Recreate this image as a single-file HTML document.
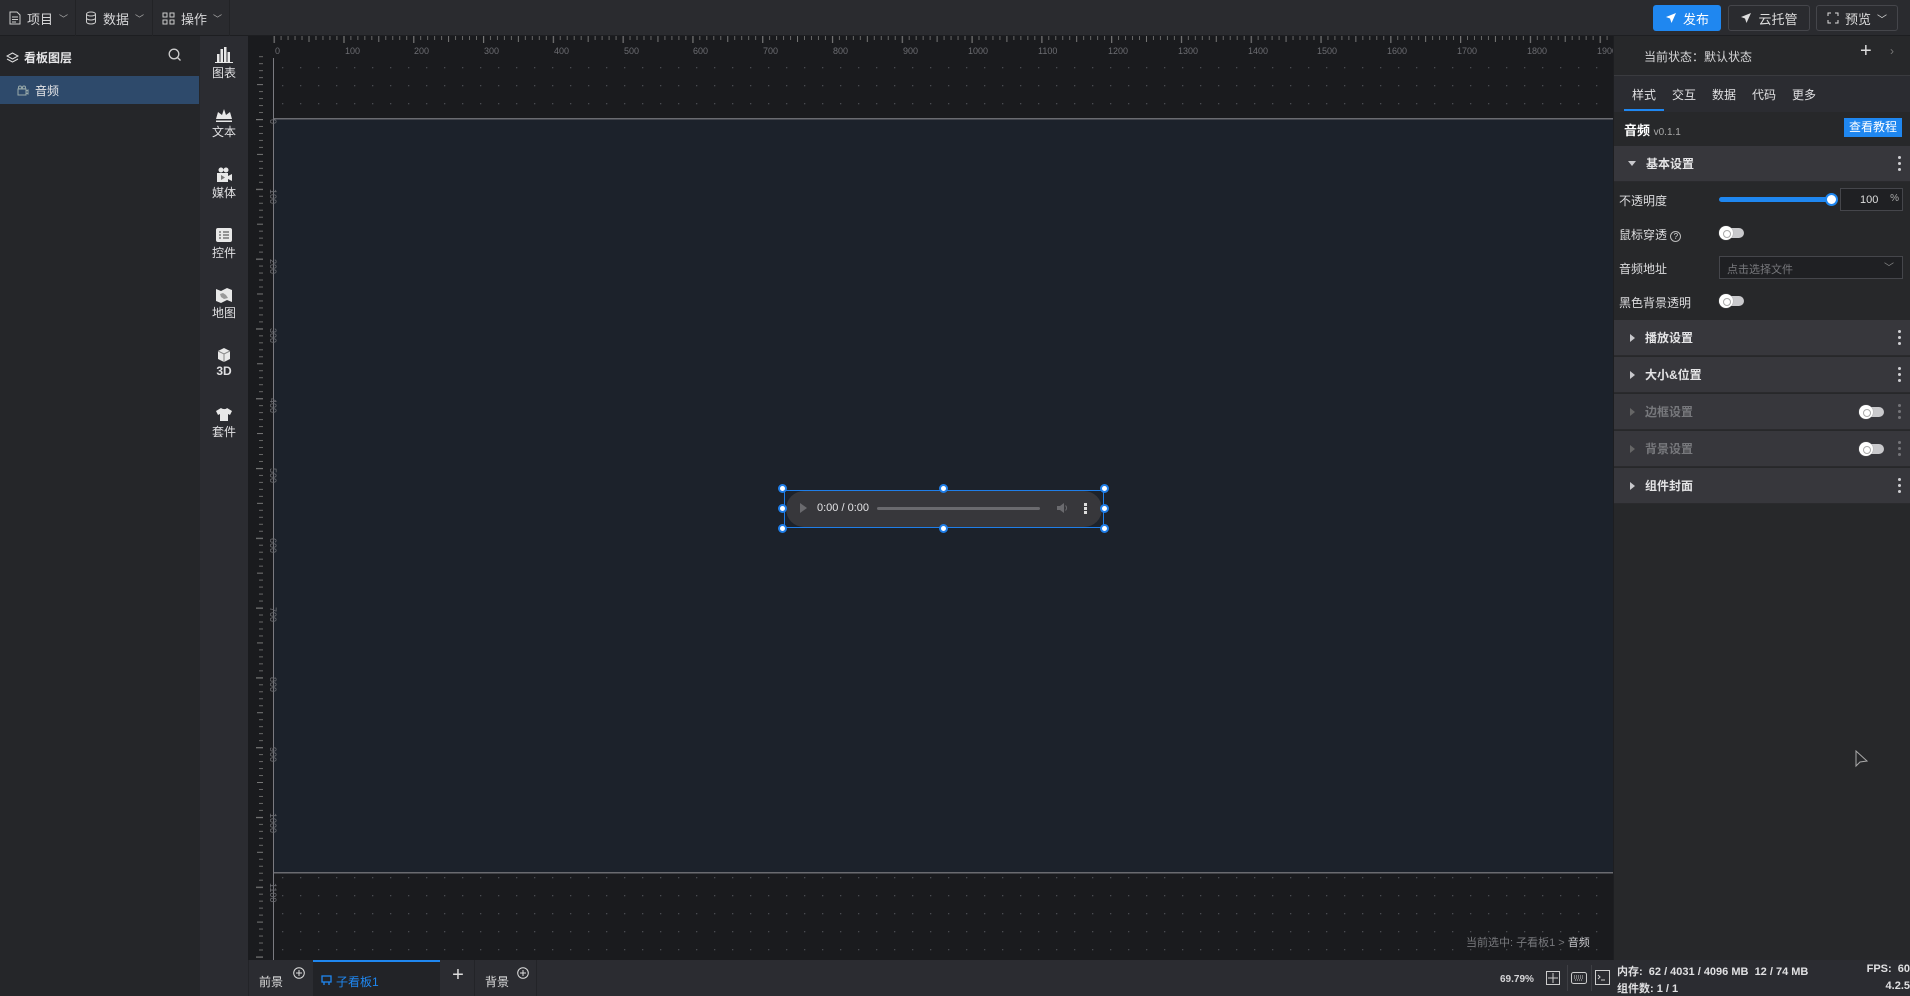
<!DOCTYPE html>
<html><head><meta charset="utf-8">
<style>
*{box-sizing:border-box;margin:0;padding:0}
body{width:1910px;height:996px;overflow:hidden;background:#1a1b1e;font-family:"Liberation Sans","Noto Sans CJK SC",sans-serif;font-size:12px;color:#d0d0d3;position:relative}
.abs{position:absolute}
#top{left:0;top:0;width:1910px;height:36px;background:#2a2b2f;border-bottom:1px solid #1d1e21}
.menu{top:0;height:36px;display:flex;align-items:center;gap:6px;color:#d6d6d8;font-size:13px;border-right:1px solid #222326}
.btn{top:5px;height:26px;border-radius:3px;display:flex;align-items:center;justify-content:center;gap:6px;font-size:13px}
#left{left:0;top:36px;width:200px;height:960px;background:#252629}
#tool{left:200px;top:36px;width:48px;height:960px;background:#2b2c31}
.ti{position:absolute;left:0;width:48px;text-align:center;font-size:12px;color:#e0e0e2}
.ti svg{display:block;margin:0 auto 1px}
#right{left:1613px;top:36px;width:297px;height:924px;background:#27282a;border-left:1px solid #1d1e21}
.sec{position:absolute;left:0;width:297px;height:36px;background:#37373c;display:flex;align-items:center;font-weight:bold;font-size:12px;color:#e4e4e6;border-bottom:1px solid #2a2a2d}
.sec .tri{width:0;height:0;border-top:4px solid transparent;border-bottom:4px solid transparent;border-left:5px solid #c8c8cc;margin:0 10px 0 16px}
.dots{position:absolute;right:10px;top:10px;width:3px}
.dots i{display:block;width:3px;height:3px;border-radius:50%;background:#d0d0d4;margin-bottom:3px}
.lbl{position:absolute;left:5px;font-size:12px;color:#dcdcde}
.tog{position:absolute;width:24px;height:10px;border-radius:5px;background:#c9c9cc}
.tog::before{content:"";position:absolute;left:-1px;top:-2px;width:14px;height:14px;border-radius:50%;background:#fff;box-shadow:0 0 1px #888}
.tog::after{content:"";position:absolute;left:3px;top:2px;width:6px;height:6px;border-radius:50%;border:1px solid #aaa}
#bottom{left:248px;top:960px;width:1365px;height:36px;background:#2b2c31}
#status{left:1613px;top:960px;width:297px;height:36px;background:#2b2c31;font-weight:bold;font-size:11px;color:#e0e0e2}
.h{position:absolute;width:9px;height:9px;border-radius:50%;background:#fff;border:2px solid #1f7ee8}
</style></head><body>

<div id="top" class="abs"></div>
<div class="abs menu" style="left:0;width:76px;padding-left:9px">
<svg width="12" height="14" viewBox="0 0 12 14"><path d="M1 1h7l3 3v9H1z" fill="none" stroke="#ccc"/><path d="M3 6h6M3 8.5h6M3 11h4" stroke="#ccc"/></svg>项目<span style="font-size:9px;color:#aaa">﹀</span></div>
<div class="abs menu" style="left:76px;width:77px;padding-left:9px">
<svg width="12" height="14" viewBox="0 0 12 14"><ellipse cx="6" cy="3" rx="4.5" ry="2" fill="none" stroke="#ccc"/><path d="M1.5 3v8c0 1 2 2 4.5 2s4.5-1 4.5-2V3M1.5 7c0 1 2 2 4.5 2s4.5-1 4.5-2" fill="none" stroke="#ccc"/></svg>数据<span style="font-size:9px;color:#aaa">﹀</span></div>
<div class="abs menu" style="left:153px;width:77px;padding-left:9px">
<svg width="13" height="13" viewBox="0 0 13 13" fill="none" stroke="#ccc"><rect x="1" y="1" width="4" height="4"/><rect x="8" y="1" width="4" height="4"/><rect x="1" y="8" width="4" height="4"/><rect x="8" y="8" width="4" height="4"/></svg>操作<span style="font-size:9px;color:#aaa">﹀</span></div>

<div class="abs btn" style="left:1653px;width:68px;background:#1f87f0;color:#fff"><svg width="12" height="12" viewBox="0 0 12 12"><path d="M11 1L1 5l4 1.5L6.5 11z" fill="#fff"/></svg>发布</div>
<div class="abs btn" style="left:1728px;width:82px;border:1px solid #45464b;color:#ddd"><svg width="12" height="12" viewBox="0 0 12 12"><path d="M11 1L1 5l4 1.5L6.5 11z" fill="#ddd"/></svg>云托管</div>
<div class="abs btn" style="left:1816px;width:82px;border:1px solid #45464b;color:#ddd"><svg width="12" height="12" viewBox="0 0 12 12" fill="none" stroke="#ddd"><path d="M1 4V1h3M8 1h3v3M11 8v3H8M4 11H1V8"/></svg>预览 <span style="font-size:10px">﹀</span></div>

<!-- left panel -->
<div id="left" class="abs">
 <div class="abs" style="left:6px;top:13px;display:flex;align-items:center;gap:5px;font-weight:bold;font-size:12px;color:#e6e6e8">
 <svg width="13" height="12" viewBox="0 0 13 12" fill="none" stroke="#ddd"><path d="M6.5 1L12 4 6.5 7 1 4z"/><path d="M1 7l5.5 3L12 7"/></svg>看板图层</div>
 <svg class="abs" style="left:168px;top:12px" width="14" height="14" viewBox="0 0 14 14" fill="none" stroke="#ccc" stroke-width="1.3"><circle cx="6" cy="6" r="4.8"/><path d="M9.5 9.5l3 3"/></svg>
 <div class="abs" style="left:0;top:40px;width:199px;height:28px;background:#2e4a6b;display:flex;align-items:center;padding-left:17px;gap:6px;font-size:12px;color:#e6e6e8">
 <svg width="12" height="11" viewBox="0 0 12 11" fill="none" stroke="#9aa"><rect x="1" y="4" width="8" height="6"/><circle cx="3" cy="2.5" r="1.5"/><circle cx="7" cy="2.5" r="1.5"/><path d="M9 6l2-1v4l-2-1"/></svg>音频</div>
</div>

<!-- toolbar -->
<div id="tool" class="abs">
 <div class="ti" style="top:11px"><svg width="18" height="16" viewBox="0 0 18 16" fill="#e8e8e8"><rect x="2" y="7" width="2.5" height="8"/><rect x="5.5" y="2" width="2.5" height="13"/><rect x="9" y="0" width="2.5" height="15"/><rect x="12.5" y="5" width="2.5" height="10"/><rect x="0" y="15" width="18" height="1"/></svg>图表</div>
 <div class="ti" style="top:72px"><svg width="18" height="14" viewBox="0 0 18 14" fill="#e8e8e8"><path d="M1 11l2-7 4 3 2-6 2 6 4-3 2 7z"/><rect x="1" y="12.5" width="16" height="1.5"/></svg>文本</div>
 <div class="ti" style="top:131px"><svg width="18" height="16" viewBox="0 0 18 16" fill="#e8e8e8"><circle cx="6" cy="3" r="2.5"/><circle cx="11" cy="3" r="2.5"/><rect x="2" y="6" width="11" height="9"/><path d="M13 9l4-2v7l-4-2z"/><path d="M6 8v5l4-2.5z" fill="#777"/></svg>媒体</div>
 <div class="ti" style="top:191px"><svg width="18" height="16" viewBox="0 0 18 16"><rect x="1" y="1" width="16" height="14" rx="2" fill="#e8e8e8"/><path d="M4 5h2M4 8h2M4 11h2M8 5h6M8 8h6M8 11h6" stroke="#777" stroke-width="1.4"/></svg>控件</div>
 <div class="ti" style="top:251px"><svg width="18" height="16" viewBox="0 0 18 16" fill="#e8e8e8"><path d="M1 2l5 2 6-3 5 2v12l-5-2-6 3-5-2z"/><path d="M5 7l3-1 3 2 2 3-4 1-3-2z" fill="#999"/></svg>地图</div>
 <div class="ti" style="top:311px;font-weight:bold"><svg width="16" height="16" viewBox="0 0 16 16"><path d="M8 1l6 3v8l-6 3-6-3V4z" fill="#e8e8e8"/><path d="M2 4l6 3 6-3M8 7v8" stroke="#888" fill="none"/></svg>3D</div>
 <div class="ti" style="top:371px"><svg width="18" height="15" viewBox="0 0 18 15" fill="#e8e8e8"><path d="M6 1L1 4l2 4 2-1v7h8V7l2 1 2-4-5-3c-1 1.5-4 1.5-6 0z"/></svg>套件</div>
</div>

<!-- rulers + canvas -->
<svg class="abs" style="left:248px;top:36px" width="1365" height="924">
 <defs>
  <pattern id="dots" x="34" y="31" width="18" height="18" patternUnits="userSpaceOnUse"><rect width="1.3" height="1.3" fill="#4a4b50"/></pattern>
  <pattern id="tx" x="25.6" y="0" width="69.79" height="20" patternUnits="userSpaceOnUse">
   <rect x="0" y="0" width="1.2" height="7" fill="#777"/>
   <g fill="#666"><rect x="6.98" width="1" height="4"/><rect x="13.96" width="1" height="4"/><rect x="20.94" width="1" height="4"/><rect x="27.92" width="1" height="4"/><rect x="34.9" width="1" height="6" fill="#777"/><rect x="41.87" width="1" height="4"/><rect x="48.85" width="1" height="4"/><rect x="55.83" width="1" height="4"/><rect x="62.81" width="1" height="4"/></g>
  </pattern>
  <pattern id="ty" x="0" y="83" width="20" height="69.79" patternUnits="userSpaceOnUse">
   <rect x="8" y="0" width="7" height="1.2" fill="#777"/>
   <g fill="#666"><rect x="11" y="6.98" width="4" height="1"/><rect x="11" y="13.96" width="4" height="1"/><rect x="11" y="20.94" width="4" height="1"/><rect x="11" y="27.92" width="4" height="1"/><rect x="9" y="34.9" width="6" height="1" fill="#777"/><rect x="11" y="41.87" width="4" height="1"/><rect x="11" y="48.85" width="4" height="1"/><rect x="11" y="55.83" width="4" height="1"/><rect x="11" y="62.81" width="4" height="1"/></g>
  </pattern>
 </defs>
 <rect width="1365" height="924" fill="#1a1b1e"/>
 <rect x="26" y="22" width="1339" height="902" fill="url(#dots)"/>
 <rect x="0" y="0" width="1365" height="20" fill="#1a1b1e"/>
 <rect x="0" y="0" width="1365" height="8" fill="url(#tx)"/>
 <rect x="0" y="0" width="24" height="924" fill="#1a1b1e"/>
 <rect x="0" y="20" width="24" height="904" fill="url(#ty)"/>
 <rect x="25" y="22" width="1" height="902" fill="#7a7a80"/>
 <rect x="26" y="83" width="1339" height="754" fill="#1c222b"/>
 <rect x="26" y="82" width="1339" height="1.5" fill="#6a6b70"/>
 <rect x="26" y="836" width="1339" height="1.5" fill="#6a6b70"/>
 <g fill="#6c6d72" font-size="9" font-family="Liberation Sans">
  <text x="27" y="18">0</text><text x="97" y="18">100</text><text x="166" y="18">200</text><text x="236" y="18">300</text><text x="306" y="18">400</text><text x="376" y="18">500</text><text x="445" y="18">600</text><text x="515" y="18">700</text><text x="585" y="18">800</text><text x="655" y="18">900</text><text x="720" y="18">1000</text><text x="790" y="18">1100</text><text x="860" y="18">1200</text><text x="930" y="18">1300</text><text x="1000" y="18">1400</text><text x="1069" y="18">1500</text><text x="1139" y="18">1600</text><text x="1209" y="18">1700</text><text x="1279" y="18">1800</text><text x="1349" y="18">1900</text>
 </g>
 <g fill="#6c6d72" font-size="9" font-family="Liberation Sans">
  <text transform="translate(22,83) rotate(90)">0</text>
  <text transform="translate(22,153) rotate(90)">100</text><text transform="translate(22,223) rotate(90)">200</text><text transform="translate(22,292) rotate(90)">300</text><text transform="translate(22,362) rotate(90)">400</text><text transform="translate(22,432) rotate(90)">500</text><text transform="translate(22,502) rotate(90)">600</text><text transform="translate(22,571) rotate(90)">700</text><text transform="translate(22,641) rotate(90)">800</text><text transform="translate(22,711) rotate(90)">900</text><text transform="translate(22,777) rotate(90)">1000</text><text transform="translate(22,847) rotate(90)">1100</text>
 </g>
</svg>
<div class="abs" style="left:1466px;top:934px;font-size:11px;color:#77787c">当前选中: 子看板1 &gt; <span style="color:#c8c8cc">音频</span></div>

<!-- audio widget -->
<div class="abs" style="left:784px;top:490px;width:320px;height:38px;border:1px solid #1f7ee8"></div>
<div class="abs" style="left:786px;top:491px;width:316px;height:36px;border-radius:18px;background:#37373b"></div>
<div class="abs" style="left:800px;top:503px;width:0;height:0;border-top:5px solid transparent;border-bottom:5px solid transparent;border-left:7px solid #6a6a6e"></div>
<div class="abs" style="left:817px;top:502px;font-size:11px;color:#e4e4e6">0:00 / 0:00</div>
<div class="abs" style="left:877px;top:507px;width:163px;height:3px;border-radius:2px;background:#6a6a6e"></div>
<svg class="abs" style="left:1056px;top:502px" width="12" height="12" viewBox="0 0 12 12"><path d="M1 4h3l4-3v10L4 8H1z" fill="#6a6a6e"/><path d="M9.5 3.5a3.5 3.5 0 010 5" stroke="#6a6a6e" fill="none"/></svg>
<div class="abs" style="left:1084px;top:503px;width:3px"><i style="display:block;width:2.5px;height:2.5px;background:#ddd;margin-bottom:1.5px"></i><i style="display:block;width:2.5px;height:2.5px;background:#ddd;margin-bottom:1.5px"></i><i style="display:block;width:2.5px;height:2.5px;background:#ddd"></i></div>
<div class="h" style="left:778px;top:484px"></div><div class="h" style="left:939px;top:484px"></div><div class="h" style="left:1100px;top:484px"></div>
<div class="h" style="left:778px;top:504px"></div><div class="h" style="left:1100px;top:504px"></div>
<div class="h" style="left:778px;top:524px"></div><div class="h" style="left:939px;top:524px"></div><div class="h" style="left:1100px;top:524px"></div>

<!-- bottom tabs -->
<div id="bottom" class="abs">
 <div class="abs" style="left:0;top:0;width:65px;height:36px;border-left:1px solid #232428"></div>
 <div class="abs" style="left:11px;top:13px;font-size:12px;color:#ddd">前景</div>
 <svg class="abs" style="left:45px;top:7px" width="12" height="12" viewBox="0 0 12 12" fill="none" stroke="#ddd"><circle cx="6" cy="6" r="5.3"/><path d="M6 3v6M3 6h6"/></svg>
 <div class="abs" style="left:65px;top:0;width:127px;height:36px;background:#222327;border-top:2px solid #1f87f0"></div>
 <svg class="abs" style="left:73px;top:15px" width="11" height="11" viewBox="0 0 11 11" fill="none" stroke="#1f87f0" stroke-width="1.3"><rect x="1" y="1" width="9" height="6"/><path d="M3 7v3M8 7v3"/></svg>
 <div class="abs" style="left:88px;top:13px;font-size:12px;color:#1f87f0">子看板1</div>
 <div class="abs" style="left:195px;top:4px;font-size:20px;color:#ddd;width:30px;text-align:center">+</div>
 <div class="abs" style="left:226px;top:0;width:63px;height:36px;border-left:1px solid #232428;border-right:1px solid #232428"></div>
 <div class="abs" style="left:237px;top:13px;font-size:12px;color:#ddd">背景</div>
 <svg class="abs" style="left:269px;top:7px" width="12" height="12" viewBox="0 0 12 12" fill="none" stroke="#ddd"><circle cx="6" cy="6" r="5.3"/><path d="M6 3v6M3 6h6"/></svg>
 <div class="abs" style="left:1252px;top:14px;font-size:10px;font-weight:bold;color:#d6d6d8">69.79%</div>
 <svg class="abs" style="left:1298px;top:11px" width="14" height="14" viewBox="0 0 14 14" fill="none" stroke="#ccc"><rect x="0.5" y="0.5" width="13" height="13"/><path d="M7 2v10M2 7h10"/></svg>
 <div class="abs" style="left:1319px;top:5px;width:1px;height:26px;background:#3e3f44"></div>
 <svg class="abs" style="left:1323px;top:12px" width="16" height="12" viewBox="0 0 16 12" fill="none" stroke="#ccc"><rect x="0.5" y="0.5" width="15" height="11" rx="2"/><path d="M3 4h10M3 6h10M4 8h8" stroke-dasharray="1 1"/></svg>
 <div class="abs" style="left:1343px;top:5px;width:1px;height:26px;background:#3e3f44"></div>
 <svg class="abs" style="left:1347px;top:10px" width="15" height="15" viewBox="0 0 15 15" fill="none" stroke="#ccc"><rect x="0.5" y="0.5" width="14" height="14"/><path d="M3 5l2 2-2 2M6 10h4"/></svg>
</div>
<div id="status" class="abs">
 <div class="abs" style="left:4px;top:3px">内存:&nbsp; 62 / 4031 / 4096 MB&nbsp; 12 / 74 MB</div>
 <div class="abs" style="right:0;top:3px">FPS:&nbsp; 60</div>
 <div class="abs" style="left:4px;top:20px">组件数: 1 / 1</div>
 <div class="abs" style="right:0;top:20px">4.2.5</div>
</div>

<!-- right panel -->
<div id="right" class="abs">
 <div class="abs" style="left:30px;top:12px;font-size:12px;color:#d6d6d8">当前状态：默认状态</div>
 <div class="abs" style="left:246px;top:4px;font-size:20px;color:#ddd">+</div>
 <div class="abs" style="left:276px;top:8px;font-size:12px;color:#777">›</div>
 <div class="abs" style="left:0;top:39px;width:297px;height:1px;background:#3a3b3f"></div>
 <div class="abs" style="left:0;top:40px;width:297px;height:36px;background:#2b2c31"></div>
 <div class="abs" style="left:18px;top:50px;font-size:12px;color:#e0e0e2">样式</div>
 <div class="abs" style="left:58px;top:50px;font-size:12px;color:#e0e0e2">交互</div>
 <div class="abs" style="left:98px;top:50px;font-size:12px;color:#e0e0e2">数据</div>
 <div class="abs" style="left:138px;top:50px;font-size:12px;color:#e0e0e2">代码</div>
 <div class="abs" style="left:178px;top:50px;font-size:12px;color:#e0e0e2">更多</div>
 <div class="abs" style="left:10px;top:73px;width:40px;height:2px;background:#1f87f0"></div>
 <div class="abs" style="left:0;top:76px;width:297px;height:34px;background:#27282a"></div>
 <div class="abs" style="left:10px;top:84px;font-size:13px;font-weight:bold;color:#fff">音频 <span style="font-size:10px;color:#aaa;font-weight:normal">v0.1.1</span></div>
 <div class="abs" style="left:230px;top:82px;width:58px;height:19px;background:#1f87f0;color:#fff;font-size:12px;text-align:center;line-height:19px">查看教程</div>
 <div class="sec" style="top:110px"><span class="tri" style="border-left:4px solid transparent;border-right:4px solid transparent;border-top:5px solid #c8c8cc;border-bottom:0;margin-left:14px"></span>基本设置<div class="dots"><i></i><i></i><i></i></div></div>
 <div class="lbl" style="top:156px">不透明度</div>
 <div class="abs" style="left:105px;top:161px;width:112px;height:5px;border-radius:3px;background:#1f87f0"></div>
 <div class="abs" style="left:211px;top:157px;width:13px;height:13px;border-radius:50%;background:#fff;border:2px solid #1f87f0"></div>
 <div class="abs" style="left:226px;top:152px;width:63px;height:23px;border:1px solid #45464b;background:#1f2023;font-size:11px;color:#ddd"><span class="abs" style="left:19px;top:5px">100</span><span class="abs" style="right:3px;top:4px;color:#aaa;font-size:10px">%</span></div>
 <div class="lbl" style="top:190px">鼠标穿透 <span style="display:inline-block;width:11px;height:11px;border:1px solid #bbb;border-radius:50%;font-size:8px;text-align:center;line-height:10px">?</span></div>
 <div class="tog" style="left:106px;top:192px"></div>
 <div class="lbl" style="top:224px">音频地址</div>
 <div class="abs" style="left:105px;top:220px;width:184px;height:23px;border:1px solid #45464b;background:#1f2023;font-size:11px;color:#77787c;padding:4px 7px">点击选择文件<span class="abs" style="right:8px;top:2px;color:#888;font-size:10px">﹀</span></div>
 <div class="lbl" style="top:258px">黑色背景透明</div>
 <div class="tog" style="left:106px;top:260px"></div>
 <div class="sec" style="top:284px"><span class="tri"></span>播放设置<div class="dots"><i></i><i></i><i></i></div></div>
 <div class="sec" style="top:321px"><span class="tri"></span>大小&amp;位置<div class="dots"><i></i><i></i><i></i></div></div>
 <div class="sec" style="top:358px;color:#77787c"><span class="tri" style="border-left-color:#666"></span>边框设置<div class="tog" style="left:246px;top:13px"></div><div class="dots" style="opacity:.4"><i></i><i></i><i></i></div></div>
 <div class="sec" style="top:395px;color:#77787c"><span class="tri" style="border-left-color:#666"></span>背景设置<div class="tog" style="left:246px;top:13px"></div><div class="dots" style="opacity:.4"><i></i><i></i><i></i></div></div>
 <div class="sec" style="top:432px"><span class="tri"></span>组件封面<div class="dots"><i></i><i></i><i></i></div></div>
</div>
<svg class="abs" style="left:1855px;top:750px" width="14" height="18" viewBox="0 0 14 18"><path d="M1 1v15l4-4 7-1z" fill="none" stroke="#aaa"/></svg>
</body></html>
